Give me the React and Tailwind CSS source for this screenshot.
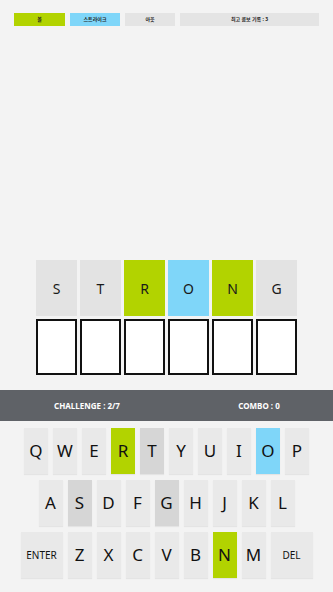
import React from "react";

const GREEN = "bg-[#b2d300]";
const BLUE = "bg-[#7fd6f9]";

function Key({ k, state, wide }) {
  let bg = "bg-[#e9e9e9]";
  if (state === "g") bg = GREEN;
  if (state === "b") bg = BLUE;
  if (state === "x") bg = "bg-[#d6d6d6]";
  return (
    <div
      className={`${bg} ${wide ? "w-[42px] text-[10px]" : "w-[24px] text-[17px]"} h-[46px] flex items-center justify-center text-[#111] shadow-[0_1px_1px_rgba(0,0,0,0.06)]`}
    >
      {k}
    </div>
  );
}

export default function App() {
  const row1 = [["Q"], ["W"], ["E"], ["R", "g"], ["T", "x"], ["Y"], ["U"], ["I"], ["O", "b"], ["P"]];
  const row2 = [["A"], ["S", "x"], ["D"], ["F"], ["G", "x"], ["H"], ["J"], ["K"], ["L"]];
  const row3 = [["Z"], ["X"], ["C"], ["V"], ["B"], ["N", "g"], ["M"]];
  const tiles = [
    ["S", "bg-[#e3e3e3]"],
    ["T", "bg-[#e3e3e3]"],
    ["R", GREEN],
    ["O", BLUE],
    ["N", GREEN],
    ["G", "bg-[#e3e3e3]"],
  ];
  return (
    <div
      className="w-[333px] h-[592px] bg-[#f3f3f3] flex flex-col overflow-hidden"
      style={{ fontFamily: '"Noto Sans", "Noto Sans CJK KR", sans-serif' }}
    >
      <div className="mt-[13px] h-[13px] flex px-[14px] gap-[5px] text-[5px] font-bold text-[#222]">
        <div className={`w-[51px] ${GREEN} flex items-center justify-center`}>볼</div>
        <div className={`w-[50px] ${BLUE} flex items-center justify-center`}>스트라이크</div>
        <div className="w-[50px] bg-[#e4e4e4] flex items-center justify-center">아웃</div>
        <div className="flex-1 bg-[#e4e4e4] flex items-center justify-center">최고 콤보 기록 : 3</div>
      </div>

      <div className="mt-[234px] flex justify-center gap-[3px]">
        {tiles.map(([l, c], i) => (
          <div key={i} className={`${c} w-[41px] h-[56px] flex items-center justify-center text-[14px] text-[#1a1a1a]`}>
            {l}
          </div>
        ))}
      </div>
      <div className="mt-[3px] flex justify-center gap-[3px]">
        {tiles.map((_, i) => (
          <div key={i} className="w-[41px] h-[56px] bg-white border-2 border-[#111]" />
        ))}
      </div>

      <div className="mt-[15px] h-[31px] bg-[#5f6267] flex items-center text-white text-[8px] font-bold">
        <div className="w-[174px] shrink-0 text-center">CHALLENGE : 2/7</div>
        <div className="w-[170px] shrink-0 text-center">COMBO : 0</div>
      </div>

      <div className="mt-[7px] flex flex-col gap-[6px]">
        <div className="flex justify-center gap-[5px]">
          {row1.map(([k, s]) => (
            <Key key={k} k={k} state={s} />
          ))}
        </div>
        <div className="flex justify-center gap-[5px]">
          {row2.map(([k, s]) => (
            <Key key={k} k={k} state={s} />
          ))}
        </div>
        <div className="flex justify-center gap-[5px]">
          <Key k="ENTER" wide />
          {row3.map(([k, s]) => (
            <Key key={k} k={k} state={s} />
          ))}
          <Key k="DEL" wide />
        </div>
      </div>
    </div>
  );
}
